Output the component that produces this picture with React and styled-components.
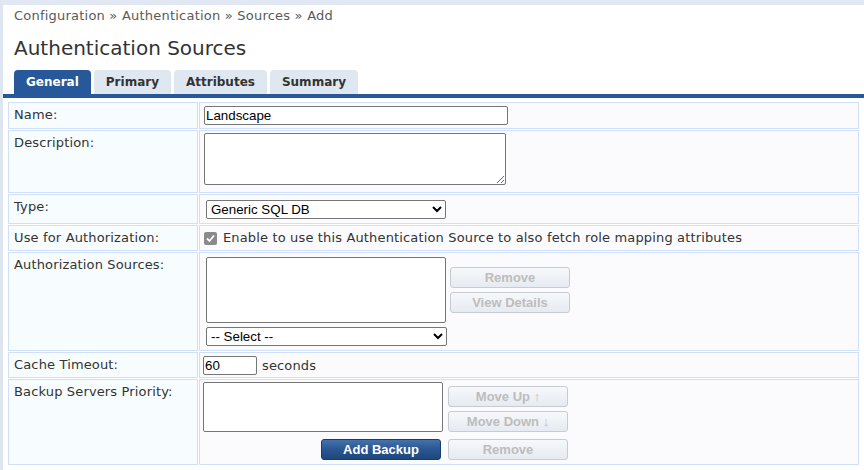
import React from 'react';
import styled, { createGlobalStyle } from 'styled-components';

const GlobalStyle = createGlobalStyle`
  html, body {
    margin: 0;
    padding: 0;
    background: #fff;
  }
  body {
    font-family: 'DejaVu Sans', Verdana, sans-serif;
    color: #333;
  }
`;

const Page = styled.div`
  min-height: 470px;
  box-sizing: border-box;
  border-top: 5px solid #e2e8f3;
  border-left: 3px solid #dde5f1;
`;

const Breadcrumb = styled.div`
  padding: 3px 0 0 11px;
  height: 16px;
  font-size: 13px;
  letter-spacing: 0.22px;
  line-height: 16px;
  color: #5a5a5a;
`;

const Title = styled.h1`
  margin: 0;
  padding: 11px 0 0 11px;
  height: 26px;
  font-size: 20px;
  font-weight: normal;
  line-height: 26px;
  color: #333;
`;

const TabBar = styled.div`
  display: flex;
  gap: 3px;
  margin-top: 9px;
  padding-left: 11px;
  border-bottom: 4px solid #27589a;
`;

const Tab = styled.div`
  height: 24px;
  padding: 0 12px;
  border-radius: 4px 4px 0 0;
  font-size: 12px;
  font-weight: bold;
  line-height: 25px;
  background: ${(p) => (p.$active ? '#27589a' : '#dfe7f1')};
  color: ${(p) => (p.$active ? '#fff' : '#333')};
`;

const FormTable = styled.table`
  margin: 3px 4px 0 4px;
  width: calc(100% - 8px);
  border-collapse: separate;
  border-spacing: 1px;
  font-size: 13px;
  letter-spacing: 0.15px;
`;

const Label = styled.td`
  width: 178px;
  padding: 3px 5px;
  vertical-align: top;
  line-height: 18px;
  background: #f7fdff;
  border: 1px solid #cfe0f8;
  color: #333;
`;

const Value = styled.td`
  padding: 3px 4px;
  vertical-align: top;
  line-height: 18px;
  background: #fbfbfe;
  border: 1px solid #cfe0f8;
  color: #333;
`;

const TextInput = styled.input`
  box-sizing: border-box;
  display: block;
  width: ${(p) => p.$w}px;
  height: 19px;
  margin: 0;
  padding: 0 1px;
  border: 1px solid #767676;
  border-radius: 2px;
  font-family: 'Liberation Sans', Arial, sans-serif;
  font-size: 13.33px;
  letter-spacing: 0;
  color: #000;
`;

const TextArea = styled.textarea`
  box-sizing: border-box;
  display: block;
  width: 302px;
  height: 52px;
  margin: -1px 0 4px;
  border: 1px solid #767676;
  border-radius: 2px;
  font-family: 'Liberation Mono', monospace;
`;

const Select = styled.select`
  box-sizing: border-box;
  display: block;
  width: ${(p) => p.$w}px;
  height: 19px;
  margin: ${(p) => p.$m || '0'};
  border: 1px solid #767676;
  border-radius: 2px;
  background: #fff;
  font-family: 'Liberation Sans', Arial, sans-serif;
  font-size: 13.33px;
  letter-spacing: 0;
  color: #000;
`;

const ListBox = styled.div`
  box-sizing: border-box;
  width: ${(p) => p.$w}px;
  height: ${(p) => p.$h}px;
  border: 1px solid #767676;
  border-radius: 2px;
  background: #fff;
`;

const CheckRow = styled.label`
  display: flex;
  align-items: center;
  gap: 6px;
  height: 18px;
`;

const Check = styled.span`
  box-sizing: border-box;
  width: 13px;
  height: 13px;
  border-radius: 2px;
  background: #8a8a8a;
  display: flex;
  align-items: center;
  justify-content: center;
`;

const ListWithButtons = styled.div`
  display: flex;
  align-items: center;
  gap: 4px;
  padding: 1px 0 0 2px;
`;

const ButtonColumn = styled.div`
  display: flex;
  flex-direction: column;
  gap: 4px;
`;

const Button = styled.button`
  box-sizing: border-box;
  width: 120px;
  height: 21px;
  padding: 0;
  border-radius: 3px;
  font-family: 'Liberation Sans', Arial, sans-serif;
  font-size: 13px;
  font-weight: bold;
  letter-spacing: 0;
  line-height: 19px;
  border: 1px solid ${(p) => (p.$primary ? '#173c6c' : '#c7ccd3')};
  color: ${(p) => (p.$primary ? '#fff' : '#bdbdbd')};
  background: ${(p) =>
    p.$primary
      ? 'linear-gradient(#4372ad, #2a5691 50%, #1e477d)'
      : 'linear-gradient(#f6f8fb, #e6ebf1)'};
`;

const TimeoutRow = styled.div`
  display: flex;
  align-items: flex-start;
  gap: 5px;
  height: 18px;
  margin-left: -1px;
  line-height: 19px;
`;

const BackupGrid = styled.div`
  display: grid;
  grid-template-columns: 240px 120px;
  column-gap: 5px;
  row-gap: 7px;
  margin: -1px 0 1px -1px;
`;

const BackupButtons = styled(ButtonColumn)`
  align-self: end;
`;

const RightCell = styled.div`
  justify-self: end;
  margin-right: 2px;
`;

const tabs = ['General', 'Primary', 'Attributes', 'Summary'];

export default function App() {
  return (
    <>
      <GlobalStyle />
      <Page>
        <Breadcrumb>Configuration » Authentication » Sources » Add</Breadcrumb>
        <Title>Authentication Sources</Title>
        <TabBar>
          {tabs.map((t, i) => (
            <Tab key={t} $active={i === 0}>
              {t}
            </Tab>
          ))}
        </TabBar>
        <FormTable>
          <tbody>
            <tr>
              <Label>Name:</Label>
              <Value>
                <TextInput $w={304} defaultValue="Landscape" />
              </Value>
            </tr>
            <tr>
              <Label>Description:</Label>
              <Value>
                <TextArea />
              </Value>
            </tr>
            <tr>
              <Label>Type:</Label>
              <Value>
                <Select $w={240} $m="2px 0 1px 2px" defaultValue="sql">
                  <option value="sql">Generic SQL DB</option>
                </Select>
              </Value>
            </tr>
            <tr>
              <Label>Use for Authorization:</Label>
              <Value>
                <CheckRow>
                  <Check>
                    <svg width="9" height="9" viewBox="0 0 9 9">
                      <path d="M1 4.5 L3.5 7 L8 1.5" fill="none" stroke="#fff" strokeWidth="1.8" />
                    </svg>
                  </Check>
                  Enable to use this Authentication Source to also fetch role mapping attributes
                </CheckRow>
              </Value>
            </tr>
            <tr>
              <Label>Authorization Sources:</Label>
              <Value>
                <ListWithButtons>
                  <ListBox $w={240} $h={66} />
                  <ButtonColumn>
                    <Button disabled>Remove</Button>
                    <Button disabled>View Details</Button>
                  </ButtonColumn>
                </ListWithButtons>
                <Select $w={241} $m="4px 0 1px 2px" defaultValue="">
                  <option value="">-- Select --</option>
                </Select>
              </Value>
            </tr>
            <tr>
              <Label>Cache Timeout:</Label>
              <Value>
                <TimeoutRow>
                  <TextInput $w={54} defaultValue="60" />
                  seconds
                </TimeoutRow>
              </Value>
            </tr>
            <tr>
              <Label>Backup Servers Priority:</Label>
              <Value>
                <BackupGrid>
                  <ListBox $w={240} $h={50} />
                  <BackupButtons>
                    <Button disabled>Move Up ↑</Button>
                    <Button disabled>Move Down ↓</Button>
                  </BackupButtons>
                  <RightCell>
                    <Button $primary>Add Backup</Button>
                  </RightCell>
                  <Button disabled>Remove</Button>
                </BackupGrid>
              </Value>
            </tr>
          </tbody>
        </FormTable>
      </Page>
    </>
  );
}
